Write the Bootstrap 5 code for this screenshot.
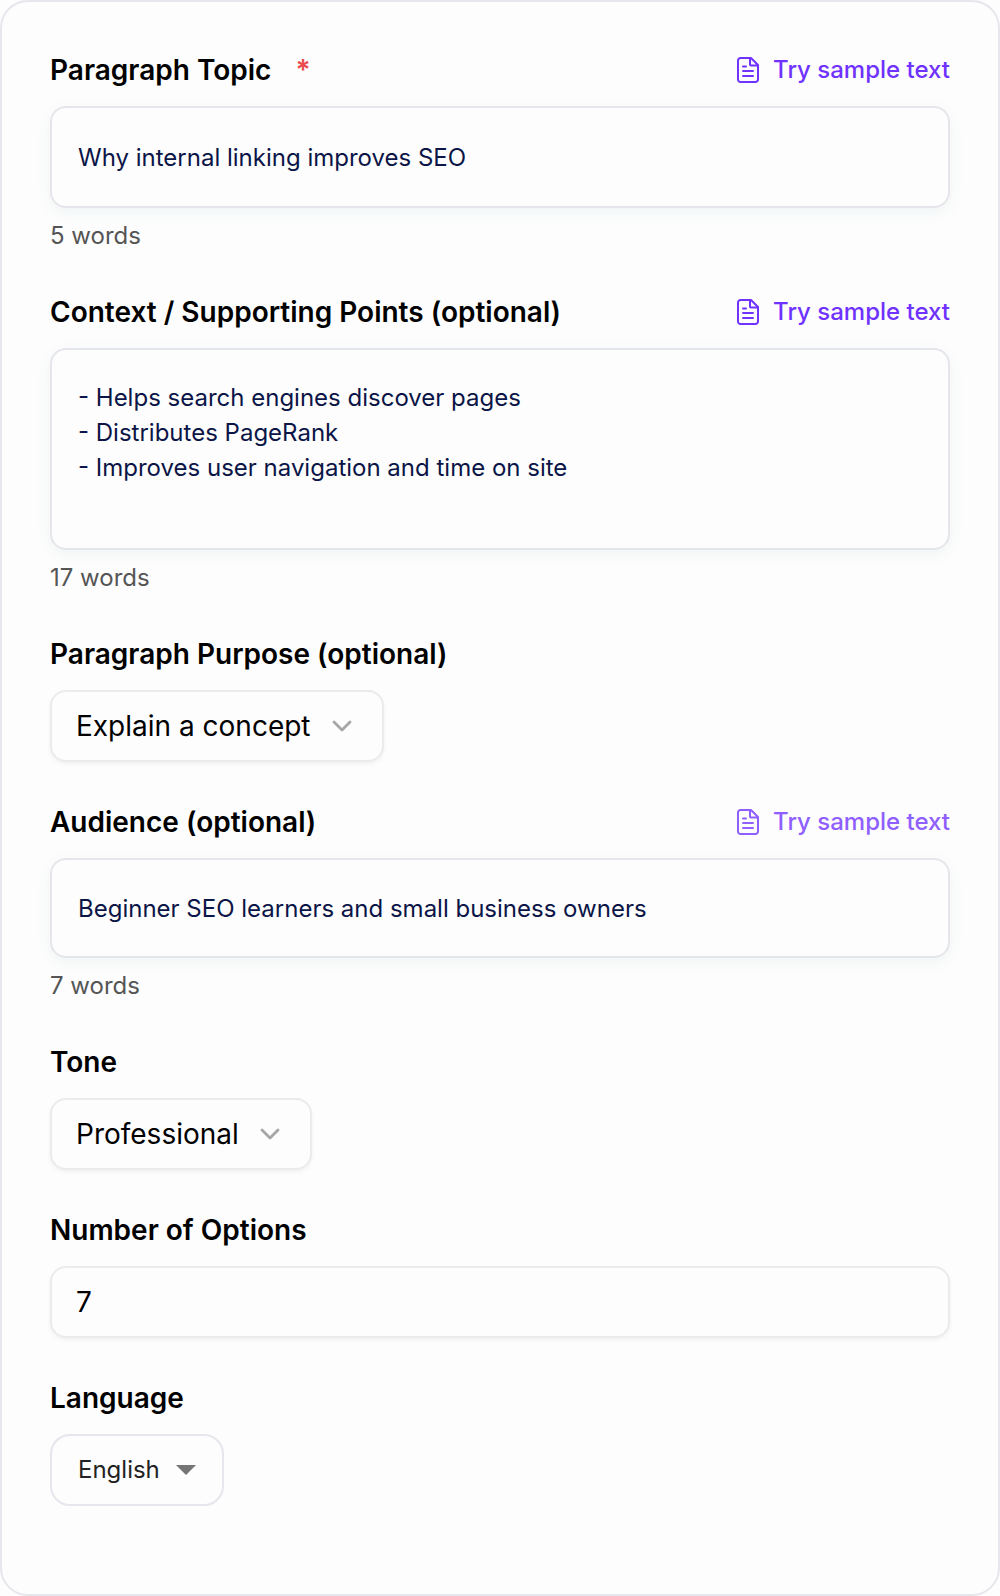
<!DOCTYPE html>
<html lang="en">
<head>
<meta charset="utf-8">
<meta name="viewport" content="width=device-width, initial-scale=1">
<title>Paragraph generator</title>
<link href="https://cdn.jsdelivr.net/npm/bootstrap@5.3.0/dist/css/bootstrap.min.css" rel="stylesheet">
<style>
  body { background: #fdfdfd; color: #000; font-family: Inter, "Liberation Sans", sans-serif; font-size: 24px; line-height: 32px; }
  .panel { background: #fdfdfd; border: 2px solid #e6e6ed; border-radius: 28px; padding: 48px 48px 88px; gap: 40px; }
  .field-title { font-size: 28px; line-height: 40px; font-weight: 600; }
  .title-row { margin-bottom: 16px; }
  .required-star { color: #e94b4f; margin-left: 24px; }
  .sample-link { color: #6f32ff; font-weight: 500; gap: 14px; }
  .sample-link:hover { color: #8f60ff; }
  .sample-link.is-hovered { color: #8f60ff; }
  .sample-link svg { width: 22px; height: 26px; }
  .word-count { color: #555; margin-top: 12px; }
  .text-field, .text-field:focus { background: #fdfdfd; color: #0b1547; border: 2px solid #e5e5eb; border-radius: 16px; padding: 30px 26px; font-size: 24px; line-height: 35px; box-shadow: 0 4px 16px rgba(0, 110, 100, .06); }
  textarea.text-field { resize: none; overflow: hidden; display: block; }
  .h-topic { height: 102px; }
  .h-audience { height: 100px; }
  .h-context { height: 202px; }
  .plain-control, .plain-control:focus { background: #fdfdfd; color: #000; border: 2px solid #ebebeb; border-radius: 16px; height: 72px; padding: 0 24px; font-size: 28px; line-height: 40px; box-shadow: 0 2px 4px rgba(0, 0, 0, .05); }
  .pick { position: relative; display: inline-block; vertical-align: top; }
  .pick select { appearance: none; display: block; }
  .pick svg { position: absolute; top: 0; bottom: 0; margin: auto 0; pointer-events: none; }
  .pick .plain-control { padding-right: 71px; }
  .pick .chevron { width: 20px; height: 12px; right: 32px; }
  .pick .lang-control { background: #fdfdfd; color: #222; border: 2px solid #e6e6ed; border-radius: 20px; height: 72px; padding: 0 62px 0 26px; font-size: 24px; line-height: 32px; }
  .pick .caret { width: 20px; height: 10px; right: 28px; }
</style>
<script src="https://cdn.jsdelivr.net/npm/bootstrap@5.3.0/dist/js/bootstrap.bundle.min.js"></script>
</head>
<body>
<svg class="d-none" aria-hidden="true">
  <symbol id="doc" viewBox="0 0 22 26">
    <g fill="none" stroke="currentColor" stroke-width="2" stroke-linejoin="round">
      <path d="M14 1H3.500A2.500 2.500 0 0 0 1 3.500v19A2.500 2.500 0 0 0 3.500 25h15a2.500 2.500 0 0 0 2.500-2.500V8z"/>
      <path d="M13 1v6.500a1 1 0 0 0 1 1h7"/>
      <path d="M6 9.500h3M6 14h10M6 19h10" stroke-linecap="round"/>
    </g>
  </symbol>
  <symbol id="chev" viewBox="0 0 20 12">
    <path d="M2 2l8 8 8-8" fill="none" stroke="#a6a6a6" stroke-width="2.800" stroke-linecap="round" stroke-linejoin="round"/>
  </symbol>
</svg>
<form class="panel d-flex flex-column">
  <div>
    <div class="title-row d-flex justify-content-between align-items-center">
      <label class="field-title" for="topic">Paragraph Topic<span class="required-star">*</span></label>
      <a href="#" class="sample-link d-flex align-items-center text-decoration-none"><svg aria-hidden="true"><use href="#doc"/></svg>Try sample text</a>
    </div>
    <input id="topic" type="text" class="form-control text-field h-topic" value="Why internal linking improves SEO">
    <div class="word-count">5 words</div>
  </div>
  <div>
    <div class="title-row d-flex justify-content-between align-items-center">
      <label class="field-title" for="context">Context / Supporting Points (optional)</label>
      <a href="#" class="sample-link d-flex align-items-center text-decoration-none"><svg aria-hidden="true"><use href="#doc"/></svg>Try sample text</a>
    </div>
    <textarea id="context" class="form-control text-field h-context">- Helps search engines discover pages
- Distributes PageRank
- Improves user navigation and time on site</textarea>
    <div class="word-count">17 words</div>
  </div>
  <div>
    <div class="title-row d-flex"><label class="field-title" for="purpose">Paragraph Purpose (optional)</label></div>
    <div class="pick">
      <select id="purpose" class="plain-control"><option>Explain a concept</option></select>
      <svg class="chevron" aria-hidden="true"><use href="#chev"/></svg>
    </div>
  </div>
  <div>
    <div class="title-row d-flex justify-content-between align-items-center">
      <label class="field-title" for="audience">Audience (optional)</label>
      <a href="#" class="sample-link is-hovered d-flex align-items-center text-decoration-none"><svg aria-hidden="true"><use href="#doc"/></svg>Try sample text</a>
    </div>
    <input id="audience" type="text" class="form-control text-field h-audience" value="Beginner SEO learners and small business owners">
    <div class="word-count">7 words</div>
  </div>
  <div>
    <div class="title-row d-flex"><label class="field-title" for="tone">Tone</label></div>
    <div class="pick">
      <select id="tone" class="plain-control"><option>Professional</option></select>
      <svg class="chevron" aria-hidden="true"><use href="#chev"/></svg>
    </div>
  </div>
  <div>
    <div class="title-row d-flex"><label class="field-title" for="options">Number of Options</label></div>
    <input id="options" type="text" inputmode="numeric" class="form-control plain-control" value="7">
  </div>
  <div>
    <div class="title-row d-flex"><label class="field-title" for="language">Language</label></div>
    <div class="pick">
      <select id="language" class="lang-control"><option>English</option></select>
      <svg class="caret" viewBox="0 0 20 10" aria-hidden="true"><path d="M0 0h20L10 10z" fill="#757575"/></svg>
    </div>
  </div>
</form>
</body>
</html>
